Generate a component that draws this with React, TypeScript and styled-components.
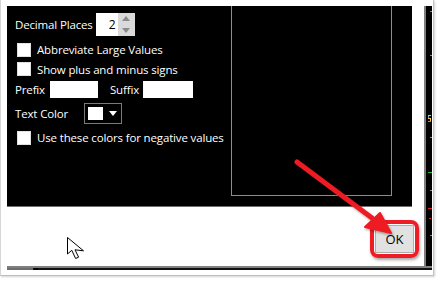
import React from "react";
import styled, { createGlobalStyle } from "styled-components";

const GlobalStyle = createGlobalStyle`
  html, body {
    margin: 0;
    padding: 0;
    background: #ffffff;
  }
  body {
    font-family: "Open Sans", "Noto Sans", sans-serif;
  }
`;

type CheckRowProps = { label: string; h: number; mt?: number };

const CheckRow: React.FC<CheckRowProps> = ({ label, h, mt = 0 }) => (
  <Row $h={h} $mt={mt} $indent={2}>
    <CheckBox />
    <Label>{label}</Label>
  </Row>
);

const ChartMarks = () => (
  <svg width="6" height="264" viewBox="0 0 6 264">
    <rect x="4" y="5" width="2" height="1" fill="#8a8a8a" />
    <rect x="4" y="49" width="2" height="1" fill="#8a8a8a" />
    <rect x="2" y="109" width="3" height="1" fill="#f2c744" />
    <rect x="2" y="110" width="1" height="3" fill="#4aa3df" />
    <rect x="2" y="112" width="3" height="1" fill="#f2c744" />
    <rect x="4" y="113" width="1" height="3" fill="#f2c744" />
    <rect x="2" y="115" width="3" height="1" fill="#4aa3df" />
    <rect x="4" y="131" width="2" height="1" fill="#8a8a8a" />
    <rect x="2" y="166" width="4" height="1" fill="#22c02a" />
    <rect x="4" y="184" width="2" height="1" fill="#8a8a8a" />
    <rect x="2" y="202" width="4" height="1" fill="#e02020" />
    <rect x="3" y="212" width="2" height="1" fill="#e02020" />
    <rect x="4" y="229" width="2" height="1" fill="#8a8a8a" />
  </svg>
);

const Arrow = () => (
  <ArrowLayer width="438" height="282" viewBox="0 0 438 282">
    <defs>
      <filter id="sh" x="-20%" y="-20%" width="140%" height="140%">
        <feDropShadow dx="1" dy="1.5" stdDeviation="1.2" floodColor="#000" floodOpacity="0.35" />
      </filter>
    </defs>
    <g filter="url(#sh)">
      <line x1="297" y1="162" x2="372" y2="218" stroke="#ee1c24" strokeWidth="5" strokeLinecap="round" />
      <polygon points="391,233 365,227 380,213" fill="#ee1c24" stroke="#ee1c24" strokeWidth="2" strokeLinejoin="round" />
    </g>
  </ArrowLayer>
);

const Cursor = () => (
  <CursorLayer width="20" height="24" viewBox="0 0 20 24">
    <path
      d="M0.5 0.5 L0.5 17 L4.8 13.3 L8.6 21.5 L11.6 20.2 L8 12.8 L16.5 13.8 Z"
      fill="#ffffff"
      stroke="#000000"
      strokeWidth="1"
      strokeLinejoin="miter"
    />
  </CursorLayer>
);

const App: React.FC = () => {
  return (
    <Frame>
      <GlobalStyle />
      <Window>
        <Top>
          <DialogCol>
            <Panel>
              <Form>
                <Row $h={23} $mt={7}>
                  <Label>Decimal Places</Label>
                  <Spinner>
                    <SpinValue>2</SpinValue>
                    <SpinButtons>
                      <SpinHalf>
                        <Tri $dir="up" />
                      </SpinHalf>
                      <SpinHalf>
                        <Tri $dir="down" />
                      </SpinHalf>
                    </SpinButtons>
                  </Spinner>
                </Row>
                <CheckRow label="Abbreviate Large Values" h={19} mt={4} />
                <CheckRow label="Show plus and minus signs" h={20} />
                <Row $h={20}>
                  <Label>Prefix</Label>
                  <TextBox $w={48} $ml={5} />
                  <Label $ml={12}>Suffix</Label>
                  <TextBox $w={50} $ml={4} />
                </Row>
                <Row $h={23} $mt={3}>
                  <Label>Text Color</Label>
                  <ColorButton>
                    <Swatch />
                    <DropTri />
                  </ColorButton>
                </Row>
                <CheckRow label="Use these colors for negative values" h={19} mt={3} />
              </Form>
              <Preview />
            </Panel>
            <ButtonBar>
              <Highlight>
                <OkButton>OK</OkButton>
              </Highlight>
            </ButtonBar>
          </DialogCol>
          <GrayBar />
          <ChartStrip>
            <ChartMarks />
          </ChartStrip>
        </Top>
        <BottomGray />
        <BottomBlack>
          <BlackLeft />
          <BlackDots />
        </BottomBlack>
      </Window>
      <Cursor />
      <Arrow />
    </Frame>
  );
};

const Frame = styled.div`
  position: relative;
  width: 438px;
  height: 282px;
  background: #ffffff;
  overflow: hidden;
`;

const Window = styled.div`
  width: 434px;
  height: 276px;
  border-left: 1px solid #d6d6d6;
  border-right: 1px solid #c4c4c4;
  border-bottom: 1px solid #bdbdbd;
  box-shadow: 1px 1px 2px rgba(0, 0, 0, 0.18);
  padding: 6px 0 0 6px;
  box-sizing: border-box;
  display: flex;
  flex-direction: column;
  background: #ffffff;
`;

const Top = styled.div`
  display: flex;
  height: 260px;
`;

const DialogCol = styled.div`
  width: 417px;
  display: flex;
  flex-direction: column;
`;

const Panel = styled.div`
  width: 405px;
  height: 201px;
  background: #000000;
  border-bottom: 1px solid #6e6e6e;
  box-sizing: border-box;
  display: flex;
  padding-left: 8px;
`;

const Form = styled.div`
  display: flex;
  flex-direction: column;
  color: #ffffff;
`;

const Row = styled.div<{ $h: number; $mt?: number; $indent?: number }>`
  display: flex;
  align-items: center;
  height: ${(p) => p.$h}px;
  margin-top: ${(p) => p.$mt || 0}px;
  padding-left: ${(p) => p.$indent || 0}px;
  white-space: nowrap;
`;

const Label = styled.span<{ $ml?: number }>`
  font-size: 11.5px;
  color: #ffffff;
  margin-left: ${(p) => p.$ml || 0}px;
  letter-spacing: -0.15px;
`;

const Spinner = styled.div`
  display: flex;
  height: 23px;
  margin-left: 3px;
`;

const SpinValue = styled.div`
  width: 22px;
  background: #ffffff;
  color: #000000;
  font-size: 12px;
  text-align: right;
  padding-right: 2px;
  box-sizing: border-box;
  line-height: 23px;
`;

const SpinButtons = styled.div`
  width: 17px;
  background: #dadada;
  display: flex;
  flex-direction: column;
`;

const SpinHalf = styled.div`
  flex: 1;
  display: flex;
  align-items: center;
  justify-content: center;
`;

const Tri = styled.span<{ $dir: "up" | "down" }>`
  width: 0;
  height: 0;
  border-left: 4px solid transparent;
  border-right: 4px solid transparent;
  ${(p) =>
    p.$dir === "up"
      ? "border-bottom: 5px solid #8a8a8a;"
      : "border-top: 5px solid #8a8a8a;"}
`;

const CheckBox = styled.span`
  width: 12px;
  height: 12px;
  background: #ffffff;
  border: 1px solid #e0e0e0;
  margin-right: 6px;
`;

const TextBox = styled.span<{ $w: number; $ml: number }>`
  width: ${(p) => p.$w}px;
  height: 17px;
  background: #ffffff;
  margin-left: ${(p) => p.$ml}px;
`;

const ColorButton = styled.div`
  width: 38px;
  height: 21px;
  margin-left: 16px;
  border: 1px solid #7a7a7a;
  box-sizing: border-box;
  display: flex;
  align-items: center;
  padding-left: 3px;
`;

const Swatch = styled.span`
  width: 15px;
  height: 13px;
  background: #ffffff;
`;

const DropTri = styled.span`
  width: 0;
  height: 0;
  margin-left: 6px;
  border-left: 4px solid transparent;
  border-right: 4px solid transparent;
  border-top: 5px solid #ffffff;
`;

const Preview = styled.div`
  width: 161px;
  height: 190px;
  margin-left: auto;
  margin-right: 20px;
  border: 1px solid #8c8c8c;
  border-top: none;
  box-sizing: border-box;
`;

const ButtonBar = styled.div`
  flex: 1;
  display: flex;
  justify-content: flex-end;
  align-items: flex-start;
  padding-top: 13px;
  padding-right: 5px;
`;

const Highlight = styled.div`
  border: 4px solid #ee1c24;
  border-radius: 8px;
  padding: 1px;
  box-shadow: 1px 2px 3px rgba(0, 0, 0, 0.35);
  display: flex;
`;

const OkButton = styled.div`
  width: 39px;
  height: 28px;
  box-sizing: border-box;
  background: #e1e1e1;
  border: 1px solid #adadad;
  color: #000000;
  font-size: 13px;
  display: flex;
  align-items: center;
  justify-content: center;
`;

const GrayBar = styled.div`
  width: 2px;
  background: #7f7f7f;
`;

const ChartStrip = styled.div`
  width: 6px;
  background: #000000;
  display: flex;
`;

const BottomGray = styled.div`
  width: 425px;
  height: 2px;
  background: #808080;
`;

const BottomBlack = styled.div`
  width: 425px;
  height: 2px;
  display: flex;
  background: #111111;
`;

const BlackLeft = styled.div`
  width: 26px;
  background: #6e6e6e;
`;

const BlackDots = styled.div`
  width: 4px;
  margin-left: 1px;
  background: #000000;
`;

const ArrowLayer = styled.svg`
  position: absolute;
  left: 0;
  top: 0;
  pointer-events: none;
`;

const CursorLayer = styled.svg`
  position: absolute;
  left: 67px;
  top: 237px;
  pointer-events: none;
`;

export default App;
